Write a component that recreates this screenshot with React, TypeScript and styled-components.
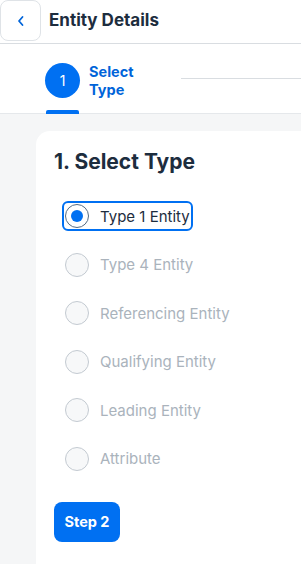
import styled, { createGlobalStyle } from "styled-components";

const GlobalStyle = createGlobalStyle`
  body {
    margin: 0;
    background: #ffffff;
    font-family: Inter, "Liberation Sans", Arial, sans-serif;
    color: #1d2d3e;
  }
  * {
    box-sizing: border-box;
  }
`;

const Page = styled.div`
  width: 301px;
  height: 564px;
  display: flex;
  flex-direction: column;
  overflow: hidden;
`;

const Header = styled.header`
  height: 44px;
  display: flex;
  align-items: flex-start;
  gap: 8px;
  border-bottom: 1px solid #d9dde1;
`;

const BackButton = styled.button`
  width: 41px;
  height: 41px;
  border: 1px solid #dfe3e7;
  border-radius: 8px;
  background: #ffffff;
  display: flex;
  align-items: center;
  justify-content: center;
  padding: 0;
  color: #0064d9;
`;

const Title = styled.h1`
  margin: 0;
  font-size: 17px;
  font-weight: 700;
  line-height: 40px;
`;

const TabBar = styled.nav`
  height: 70px;
  display: flex;
  align-items: center;
  padding: 4px 0 0 45px;
  background: #ffffff;
  border-bottom: 1px solid #e5e8eb;
`;

const Step = styled.div`
  position: relative;
  height: 100%;
  display: flex;
  align-items: center;
  gap: 9px;
  &::after {
    content: "";
    position: absolute;
    left: 1px;
    bottom: -1px;
    width: 33px;
    height: 4px;
    border-radius: 2px 2px 0 0;
    background: #0070f2;
  }
`;

const StepCircle = styled.div`
  width: 35px;
  height: 35px;
  border-radius: 50%;
  background: #0070f2;
  color: #ffffff;
  display: flex;
  align-items: center;
  justify-content: center;
  font-size: 14px;
`;

const StepLabel = styled.div`
  width: 60px;
  color: #0064d9;
  font-size: 14.5px;
  font-weight: 700;
  line-height: 18px;
`;

const Connector = styled.div`
  flex: 1;
  height: 1px;
  margin: 0 0 4px 32px;
  background: #d9dde1;
`;

const Content = styled.main`
  flex: 1;
  background: #f5f6f7;
  padding: 17px 0 0 36px;
  display: flex;
`;

const Card = styled.section`
  flex: 1;
  background: #ffffff;
  border-top-left-radius: 14px;
  padding: 18px 0 0 18px;
`;

const Heading = styled.h2`
  margin: 0 0 26px;
  font-size: 21px;
  font-weight: 700;
  line-height: 26px;
`;

const RadioList = styled.div`
  display: flex;
  flex-direction: column;
  gap: 18.5px;
  padding-left: 8px;
`;

const RadioRow = styled.label<{ $focused?: boolean; $disabled?: boolean }>`
  align-self: flex-start;
  height: 30px;
  display: flex;
  align-items: center;
  gap: 11px;
  padding: 0 1px 0 1px;
  border: 2px solid ${(p) => (p.$focused ? "#0070f2" : "transparent")};
  border-radius: 6px;
  font-size: 15px;
  color: ${(p) => (p.$disabled ? "#aab3bc" : "#1d2d3e")};
`;

const RadioCircle = styled.span<{ $checked?: boolean; $disabled?: boolean }>`
  width: 24px;
  height: 24px;
  border-radius: 50%;
  border: 1px solid ${(p) => (p.$disabled ? "#c3cad1" : "#556b82")};
  background: ${(p) => (p.$disabled ? "#f7f8f9" : "#ffffff")};
  display: flex;
  align-items: center;
  justify-content: center;
  &::after {
    content: "";
    width: 12px;
    height: 12px;
    border-radius: 50%;
    background: ${(p) => (p.$checked ? "#0070f2" : "transparent")};
  }
`;

const PrimaryButton = styled.button`
  margin-top: 28px;
  width: 66px;
  height: 40px;
  border: none;
  border-radius: 8px;
  background: #0070f2;
  color: #ffffff;
  font-family: inherit;
  font-size: 14.5px;
  font-weight: 700;
`;

const types = [
  "Type 1 Entity",
  "Type 4 Entity",
  "Referencing Entity",
  "Qualifying Entity",
  "Leading Entity",
  "Attribute",
];

export default function App() {
  return (
    <Page>
      <GlobalStyle />
      <Header>
        <BackButton aria-label="Back">
          <svg width="10" height="12" viewBox="0 0 10 12">
            <path
              d="M6.5 2 L3 6 L6.5 10"
              fill="none"
              stroke="currentColor"
              strokeWidth="1.8"
              strokeLinecap="round"
              strokeLinejoin="round"
            />
          </svg>
        </BackButton>
        <Title>Entity Details</Title>
      </Header>
      <TabBar>
        <Step>
          <StepCircle>1</StepCircle>
          <StepLabel>Select Type</StepLabel>
        </Step>
        <Connector />
      </TabBar>
      <Content>
        <Card>
          <Heading>1. Select Type</Heading>
          <RadioList>
            {types.map((t, i) => (
              <RadioRow key={t} $focused={i === 0} $disabled={i !== 0}>
                <RadioCircle $checked={i === 0} $disabled={i !== 0} />
                {t}
              </RadioRow>
            ))}
          </RadioList>
          <PrimaryButton>Step 2</PrimaryButton>
        </Card>
      </Content>
    </Page>
  );
}
